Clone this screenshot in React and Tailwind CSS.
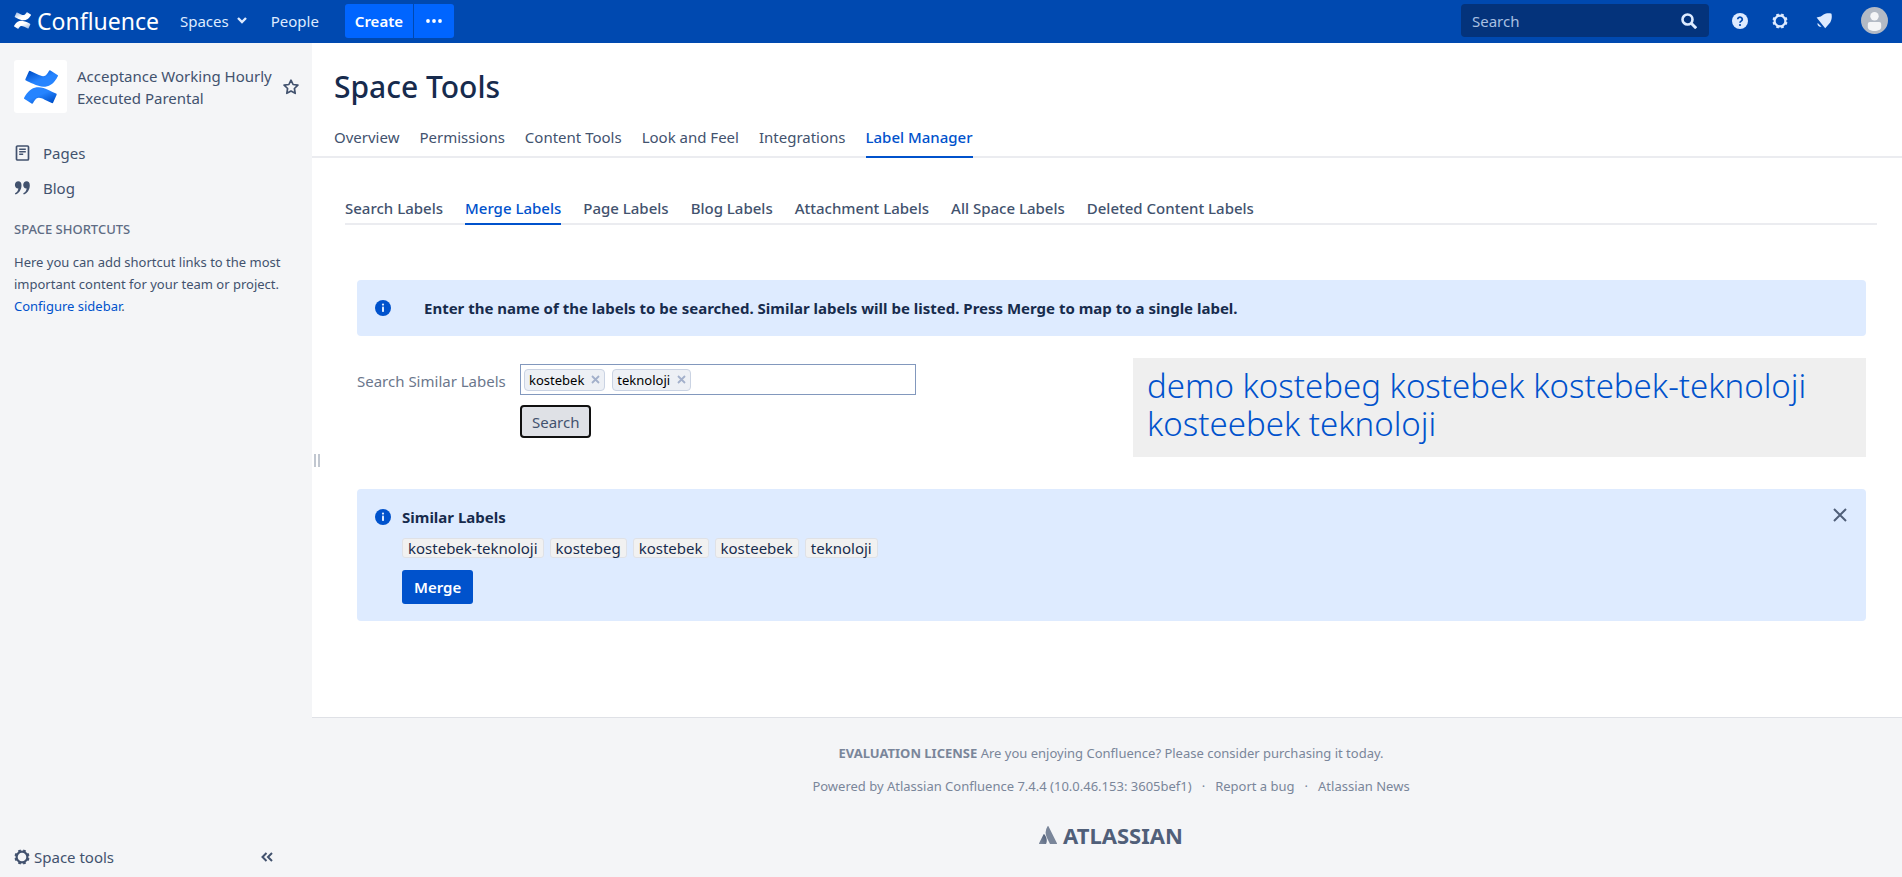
const spaceTabs = ['Overview', 'Permissions', 'Content Tools', 'Look and Feel', 'Integrations', 'Label Manager']

const labelTabs = [
  'Search Labels',
  'Merge Labels',
  'Page Labels',
  'Blog Labels',
  'Attachment Labels',
  'All Space Labels',
  'Deleted Content Labels',
]

const selectedLabels = ['kostebek', 'teknoloji']
const cloudLabels = ['demo', 'kostebeg', 'kostebek', 'kostebek-teknoloji', 'kosteebek', 'teknoloji']
const similarLabels = ['kostebek-teknoloji', 'kostebeg', 'kostebek', 'kosteebek', 'teknoloji']

const ConfluenceMark = ({ id, from, to, className }) => (
  <svg viewBox="0 0 24 24" className={className} aria-hidden="true">
    <defs>
      <linearGradient id={`${id}-bottom`} x1="1" y1="1" x2="0.3" y2="0.2">
        <stop offset="0.15" stopColor={from} />
        <stop offset="0.7" stopColor={to} />
      </linearGradient>
      <linearGradient id={`${id}-top`} x1="0" y1="0" x2="0.7" y2="0.8">
        <stop offset="0.15" stopColor={from} />
        <stop offset="0.7" stopColor={to} />
      </linearGradient>
    </defs>
    <path
      fill={`url(#${id}-bottom)`}
      d="M.87 18.257c-.248.382-.53.875-.763 1.245a.764.764 0 0 0 .255 1.04l4.965 3.054a.764.764 0 0 0 1.058-.26c.199-.332.454-.763.733-1.221 1.967-3.247 3.945-2.853 7.508-1.146l4.957 2.337a.764.764 0 0 0 1.028-.382l2.364-5.346a.764.764 0 0 0-.382-1 599.851 599.851 0 0 1-4.965-2.361C10.911 10.97 5.224 11.185.87 18.257z"
    />
    <path
      fill={`url(#${id}-top)`}
      d="M23.131 5.743c.249-.405.531-.875.764-1.25a.764.764 0 0 0-.256-1.034L18.675.404a.764.764 0 0 0-1.058.26c-.195.335-.451.763-.734 1.225-1.966 3.246-3.945 2.85-7.508 1.146L4.437.694a.764.764 0 0 0-1.027.382L1.046 6.422a.764.764 0 0 0 .382 1c1.039.49 3.105 1.467 4.965 2.361 6.698 3.246 12.392 3.029 16.738-4.04z"
    />
  </svg>
)

const GearIcon = ({ className }) => (
  <svg viewBox="0 0 16 16" fill="none" stroke="currentColor" className={className} aria-hidden="true">
    <circle cx="8" cy="8" r="5.4" strokeWidth="2.2" />
    <path
      strokeWidth="2.8"
      d="M6.1 3.2 5.2 1M9.9 3.2 10.8 1M6.1 12.8 5.2 15M9.9 12.8 10.8 15M3.2 6.1 1 5.2M3.2 9.9 1 10.8M12.8 6.1 15 5.2M12.8 9.9 15 10.8"
    />
  </svg>
)

const InfoIcon = () => (
  <svg viewBox="0 0 16 16" className="size-4 shrink-0" aria-hidden="true">
    <circle cx="8" cy="8" r="8" fill="#0052cc" />
    <circle cx="8" cy="4.6" r="1.1" fill="#deebff" />
    <rect x="7" y="6.6" width="2" height="5.4" rx="0.8" fill="#deebff" />
  </svg>
)

const Header = () => (
  <header className="flex h-[43px] shrink-0 items-center bg-[#0049b0] px-[14px] pb-[2px] text-[#deebff]">
    <a href="#home" className="flex items-center gap-[6px] text-white">
      <ConfluenceMark id="nav" from="#a9c3e8" to="#ffffff" className="size-[17px]" />
      <span className="text-[23px] leading-6">Confluence</span>
    </a>
    <nav className="ml-[21px] flex items-center">
      <button className="flex items-center gap-2">
        Spaces
        <svg viewBox="0 0 10 7" fill="none" stroke="currentColor" strokeWidth="2.4" className="w-[10px]" aria-hidden="true">
          <path d="m1 1 4 4 4-4" />
        </svg>
      </button>
      <a href="#people" className="ml-6">People</a>
    </nav>
    <div className="ml-[26px] flex h-[34px] gap-px text-white">
      <button className="rounded-l-[3px] bg-[#0065ff] px-[10px] font-semibold">Create</button>
      <button aria-label="More" className="flex w-10 items-center justify-center rounded-r-[3px] bg-[#0065ff]">
        <svg viewBox="0 0 16 4" fill="currentColor" className="w-4" aria-hidden="true">
          <circle cx="2" cy="2" r="1.9" />
          <circle cx="8" cy="2" r="1.9" />
          <circle cx="14" cy="2" r="1.9" />
        </svg>
      </button>
    </div>
    <div className="ml-auto flex items-center">
      <form className="flex h-[33px] w-[248px] items-center rounded-[4px] bg-[#04337b] pr-3 pl-[11px]">
        <input
          type="text"
          placeholder="Search"
          aria-label="Search"
          className="w-full min-w-0 bg-transparent outline-none placeholder:text-[#a9c0e2]"
        />
        <svg viewBox="0 0 16 16" fill="none" stroke="currentColor" className="size-4 shrink-0" aria-hidden="true">
          <circle cx="6.5" cy="6.5" r="5" strokeWidth="2.6" />
          <path d="m10.2 10.2 5 5" strokeWidth="3" />
        </svg>
      </form>
      <button aria-label="Help" className="ml-[23px]">
        <svg viewBox="0 0 16 16" className="size-4" aria-hidden="true">
          <circle cx="8" cy="8" r="8" fill="#deebff" />
          <path d="M5.7 6.3a2.3 2.1 0 1 1 3.5 1.8c-.8.5-1.2.8-1.2 1.7" fill="none" stroke="#0049b0" strokeWidth="1.7" />
          <circle cx="8" cy="12" r="1.1" fill="#0049b0" />
        </svg>
      </button>
      <button aria-label="Administration" className="ml-6">
        <GearIcon className="size-4" />
      </button>
      <button aria-label="Notifications" className="ml-7">
        <svg viewBox="0 0 16 16" fill="currentColor" className="size-4" aria-hidden="true">
          <path d="M15.5.7C13 0 9.800.300 7.600 1.600L4.800 3.600.600 4.400 9.200 15.200l2.400-2.600L14.200 9.400c1.600-2.400 1.900-5.800 1.300-8.700z" />
          <path d="M1.700 10c-.8 2 1 4.200 3.900 3.700z" />
        </svg>
      </button>
      <button aria-label="Profile" className="ml-[29px]">
        <svg viewBox="0 0 27 27" className="size-[27px]" aria-hidden="true">
          <circle cx="13.5" cy="13.5" r="13.5" fill="#b3bac5" />
          <circle cx="13.5" cy="9.3" r="4.2" fill="#f4f5f7" />
          <path d="M6.800 17a2 2 0 0 1 2-2h9.400a2 2 0 0 1 2 2v3.300c0 2.200-3 3.700-6.700 3.700s-6.700-1.500-6.700-3.700z" fill="#f4f5f7" />
        </svg>
      </button>
    </div>
  </header>
)

const Sidebar = () => (
  <aside className="flex w-[312px] shrink-0 flex-col bg-[#f4f5f7] px-[14px] pt-[17px] pb-[10px] text-[#42526e]">
    <div className="flex items-center">
      <a href="#space" aria-label="Space home" className="flex size-[53px] shrink-0 items-center justify-center rounded-[3px] bg-white">
        <ConfluenceMark id="space" from="#0052cc" to="#2684ff" className="size-[34px]" />
      </a>
      <a href="#space" className="ml-[10px] w-[204px] leading-[22px]">
        Acceptance Working Hourly Executed Parental
      </a>
      <button aria-label="Favourite" className="ml-auto -mr-px">
        <svg viewBox="0 0 16 16" fill="none" stroke="currentColor" strokeWidth="1.7" strokeLinejoin="round" className="size-4" aria-hidden="true">
          <path d="m8 1.200 2.100 4.300 4.800.7-3.500 3.300.8 4.800L8 12l-4.200 2.300.8-4.800L1.100 6.200l4.800-.7z" />
        </svg>
      </button>
    </div>
    <nav className="mt-[22px]">
      <a href="#pages" className="flex h-[35px] items-center gap-[13px]">
        <svg viewBox="0 0 16 16" fill="none" stroke="currentColor" className="size-4" aria-hidden="true">
          <rect x="2.5" y="1" width="12" height="14" rx="1" strokeWidth="1.7" />
          <path d="M5.200 4.300h6.600M5.200 6.800h6.600M5.200 9.300h4" strokeWidth="1.4" />
        </svg>
        Pages
      </a>
      <a href="#blog" className="flex h-[35px] items-center gap-[13px]">
        <svg viewBox="0 0 16 16" fill="currentColor" className="size-4" aria-hidden="true">
          <path d="M4.300 1.200c2 0 3.200 1.600 3.200 4 0 4.600-2.600 8-6 9.300l-.6-1.200c2-1 3.200-2.700 3.500-4.900C2.300 8.600.9 7 .9 5c0-2.200 1.400-3.800 3.400-3.800z" />
          <path d="M12.600 1.200c2 0 3.200 1.600 3.200 4 0 4.600-2.600 8-6 9.300l-.6-1.200c2-1 3.200-2.700 3.500-4.900-2.100.2-3.500-1.400-3.500-3.400 0-2.200 1.400-3.800 3.400-3.800z" />
        </svg>
        Blog
      </a>
    </nav>
    <h2 className="mt-[13px] text-[13px] leading-[22px] font-medium text-[#5e6c84]">SPACE SHORTCUTS</h2>
    <p className="mt-[11px] text-[13px] leading-[22px]">
      Here you can add shortcut links to the most important content for your team or project.{' '}
      <a href="#configure" className="text-[#0052cc]">Configure sidebar</a>.
    </p>
    <div className="mt-auto flex items-center">
      <button className="flex items-center gap-1">
        <GearIcon className="size-4" />
        Space tools
      </button>
      <button aria-label="Collapse sidebar" className="mr-[25px] ml-auto">
        <svg viewBox="0 0 12 10" fill="none" stroke="currentColor" strokeWidth="2" className="w-3" aria-hidden="true">
          <path d="M5.500 1 1.500 5l4 4M11 1 7 5l4 4" />
        </svg>
      </button>
    </div>
  </aside>
)

const LabelChip = ({ name }) => (
  <span className="flex h-[22px] items-center gap-[7px] rounded-[4px] border border-[#cad3e3] bg-[#edf0f5] px-1 text-[13px] text-black">
    {name}
    <button type="button" aria-label={`Remove ${name}`} className="text-[#a3b0cb]">
      <svg viewBox="0 0 9 9" fill="none" stroke="currentColor" strokeWidth="1.8" className="size-[9px]" aria-hidden="true">
        <path d="m1 1 7 7M8 1 1 8" />
      </svg>
    </button>
  </span>
)

const SearchForm = () => (
  <form className="flex">
    <label htmlFor="labels" className="mt-3 w-[163px] text-[#6b778c]">Search Similar Labels</label>
    <div className="mt-[6px]">
      <div className="flex h-[31px] w-[396px] items-center gap-[7px] border border-[#8298bd] px-[3px]">
        {selectedLabels.map(name => (
          <LabelChip key={name} name={name} />
        ))}
        <input id="labels" type="text" className="min-w-0 flex-1 text-[13px] outline-none" />
      </div>
      <button type="button" className="mt-[10px] h-[33px] rounded-[4px] border-2 border-[#101010] bg-[#dfe1e6] px-[10px] text-[#42526e]">
        Search
      </button>
    </div>
  </form>
)

const SimilarLabels = () => (
  <section className="mt-8 flex items-start rounded-[4px] bg-[#deebff] px-[18px] pt-4 pb-[17px]">
    <div className="flex h-6 items-center">
      <InfoIcon />
    </div>
    <div className="ml-[11px]">
      <h2 className="leading-6 font-bold">Similar Labels</h2>
      <ul className="mt-[9px] flex gap-[6px]">
        {similarLabels.map(name => (
          <li key={name} className="h-5 rounded-[3px] border border-[#dfe1e6] bg-[#f1f1f1] px-[5px] leading-[18px]">
            {name}
          </li>
        ))}
      </ul>
      <button className="mt-3 h-[34px] rounded-[3px] bg-[#0052cc] px-3 font-semibold text-white">Merge</button>
    </div>
    <button aria-label="Close" className="mt-[2px] ml-auto text-[#505f79]">
      <svg viewBox="0 0 16 16" fill="none" stroke="currentColor" strokeWidth="2" className="size-4" aria-hidden="true">
        <path d="m2 2 12 12M14 2 2 14" />
      </svg>
    </button>
  </section>
)

const Footer = () => (
  <footer className="flex-1 border-t border-[#dfe1e6] bg-[#f4f5f7] pt-6 pb-8 pl-2 text-center text-[13px] leading-[22px] text-[#7a869a]">
    <p>
      <strong className="font-bold">EVALUATION LICENSE</strong> Are you enjoying Confluence? Please consider
      purchasing it today.
    </p>
    <ul className="mt-[11px] flex justify-center gap-[10px]">
      <li>Powered by Atlassian Confluence 7.4.4 (10.0.46.153: 3605bef1)</li>
      <li aria-hidden="true">·</li>
      <li><a href="#bug">Report a bug</a></li>
      <li aria-hidden="true">·</li>
      <li><a href="#news">Atlassian News</a></li>
    </ul>
    <a href="#atlassian" className="mt-[27px] flex items-center justify-center gap-[6px] text-[#505f79]">
      <svg viewBox="0 0 24 24" className="size-[18px]" aria-hidden="true">
        <defs>
          <linearGradient id="peak" x1="1" y1="0.2" x2="0.3" y2="1">
            <stop offset="0" stopColor="#505f79" />
            <stop offset="1" stopColor="#7a869a" />
          </linearGradient>
        </defs>
        <path fill="url(#peak)" d="M7.120 11.084a.683.683 0 00-1.160.126L.075 22.974a.703.703 0 00.630 1.018h8.190a.678.678 0 00.630-.390c1.767-3.650.696-9.203-2.406-12.520z" />
        <path fill="#7a869a" d="M11.434.386a15.515 15.515 0 00-.906 15.317l3.950 7.900a.703.703 0 00.628.388h8.190a.703.703 0 00.630-1.017L12.630.380a.664.664 0 00-1.196.006z" />
      </svg>
      <span className="text-[22px] font-bold">ATLASSIAN</span>
    </a>
  </footer>
)

export default function App() {
  return (
    <div className="flex min-h-screen flex-col bg-white font-['Noto_Sans',sans-serif] text-[15px] leading-[22px] text-[#172b4d]">
      <Header />
      <div className="flex flex-1">
        <Sidebar />
        <div className="-mr-[10px] flex w-[10px] shrink-0 items-center justify-center gap-[2px] self-center">
          <span className="h-[13px] w-[2px] bg-[#c1c7d0]" />
          <span className="h-[13px] w-[2px] bg-[#c1c7d0]" />
        </div>
        <main className="flex min-w-0 flex-1 flex-col">
          <h1 className="mt-[26px] ml-[22px] text-[30px] leading-9 font-medium">Space Tools</h1>
          <nav className="mt-[18px] flex gap-5 border-b-2 border-[#ebecf0] px-[22px] text-[#42526e]">
            {spaceTabs.map(tab => (
              <a
                key={tab}
                href="#tab"
                className={tab === 'Label Manager' ? '-mb-[2px] border-b-2 border-[#0052cc] pt-[3px] pb-2 font-medium text-[#0052cc]' : 'pt-[3px] pb-2'}
              >
                {tab}
              </a>
            ))}
          </nav>
          <nav className="mt-[36px] mr-[25px] ml-[33px] flex gap-[22px] border-b-2 border-[#ebecf0] font-medium text-[#42526e]">
            {labelTabs.map(tab => (
              <a
                key={tab}
                href="#labels"
                className={tab === 'Merge Labels' ? '-mb-[2px] border-b-2 border-[#0052cc] pt-[3px] pb-1 text-[#0052cc]' : 'pt-[3px] pb-1'}
              >
                {tab}
              </a>
            ))}
          </nav>
          <div className="mt-[55px] mr-9 mb-24 ml-[45px]">
            <div className="flex h-14 items-center gap-[33px] rounded-[4px] bg-[#deebff] px-[18px] font-bold">
              <InfoIcon />
              <p>Enter the name of the labels to be searched. Similar labels will be listed. Press Merge to map to a single label.</p>
            </div>
            <div className="mt-[22px] flex justify-between">
              <SearchForm />
              <div className="h-[99px] w-[733px] bg-[#efefef] px-[14px] pt-[9px] text-[33px] leading-[38px] font-[350] text-[#0052cc]">
                {cloudLabels.map(name => (
                  <span key={name}>
                    <a href="#label" className="inline-block">{name}</a>{' '}
                  </span>
                ))}
              </div>
            </div>
            <SimilarLabels />
          </div>
          <Footer />
        </main>
      </div>
    </div>
  )
}
